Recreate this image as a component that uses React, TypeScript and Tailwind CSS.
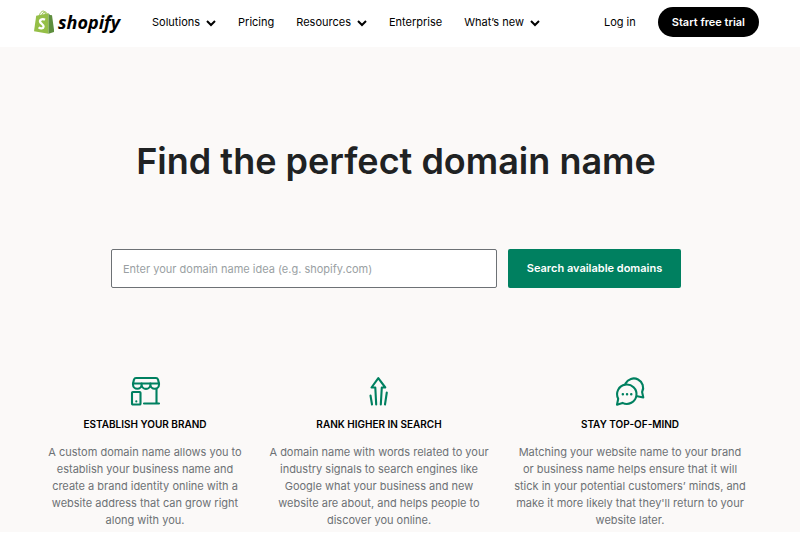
import React from 'react';

const navItems = [
  { label: 'Solutions', menu: true },
  { label: 'Pricing', menu: false },
  { label: 'Resources', menu: true },
  { label: 'Enterprise', menu: false },
  { label: 'What’s new', menu: true }
];

function ShopIcon() {
  return (
    <svg className="h-8 w-8" viewBox="0 0 32 32" fill="none" stroke="#008060" strokeWidth="2.1" strokeLinejoin="round" strokeLinecap="round" aria-hidden="true">
      <path d="M7 3h20q1.500 0 2 1.500L30 8.500H4l1-4Q5.500 3 7 3z" />
      <path d="M4 8.500v1a4.300 4.300 0 0 0 8.600 0a4.400 4.400 0 0 0 8.800 0a4.300 4.300 0 0 0 8.600 0v-1M12.600 8.500v1M21.400 8.500v1" />
      <path d="M27.500 14v14.500M15 28.500h15" />
      <rect x="3" y="17" width="8.500" height="12.500" rx="0.800" />
      <path d="M7.300 26.300v.2" />
    </svg>);

}

function ArrowIcon() {
  return (
    <svg className="h-8 w-8" viewBox="0 0 32 32" fill="none" stroke="#008060" strokeWidth="2.1" strokeLinejoin="round" strokeLinecap="round" aria-hidden="true">
      <path d="M13.200 29.500L12.300 12.500H8.500l6.800-9.300 7 9.300h-3.500l-1 17" />
      <path d="M7.500 20.500l1.500 9M23.800 17.500l-1.800 12" />
    </svg>);

}

function ChatIcon() {
  return (
    <svg className="h-8 w-8" viewBox="0 0 32 32" fill="none" stroke="#008060" strokeWidth="2.1" strokeLinejoin="round" strokeLinecap="round" aria-hidden="true">
      <path d="M3 29.700l1.200-6a9.700 9.700 0 1 1 4.300 4.200z" />
      <path d="M11.500 8.500a9.200 9.200 0 1 1 16.600 8.500l1.200 5.500-6-1.300" />
      <path d="M8.800 19.200h.1M13 19.200h.1M17.200 19.200h.1" strokeWidth="2.400" />
    </svg>);

}

const features = [
  {
    title: 'Establish your brand',
    icon: <ShopIcon />,
    width: 'max-w-[200px]',
    text: 'A custom domain name allows you to establish your business name and create a brand identity online with a website address that can grow right along with you.'
  },
  {
    title: 'Rank higher in search',
    icon: <ArrowIcon />,
    width: 'max-w-[225px]',
    text: 'A domain name with words related to your industry signals to search engines like Google what your business and new website are about, and helps people to discover you online.'
  },
  {
    title: 'Stay top-of-mind',
    icon: <ChatIcon />,
    width: 'max-w-[232px]',
    text: "Matching your website name to your brand or business name helps ensure that it will stick in your potential customers’ minds, and make it more likely that they'll return to your website later."
  }
];

function Logo() {
  return (
    <a href="#" className="flex items-center gap-1 text-black" aria-label="shopify">
      <svg className="h-6 w-5" viewBox="0 0 20 24" aria-hidden="true">
        <path d="M5 7C5.500 3 8 .9 9.500 1.100c1.600.2 2 2.600 2 4.900M7.500 6C8 3.500 10 1.500 11.500 2c1.300.5 1.700 2 1.800 3.500" fill="none" stroke="#95bf47" strokeWidth="1" />
        <path d="M2.200 5.800L14.500 3.200v20.600L0 21.300z" fill="#95bf47" />
        <path d="M14.500 3.200l1.500 1.900 2 .2L20.300 22l-5.800 1.800z" fill="#5e8e3e" />
        <path d="M11 9.800C9 8.600 5.800 9.100 6 11.600c.2 2.100 3.900 2.700 3.600 5-.2 2.100-3 2.300-5 .8" fill="none" stroke="#fff" strokeWidth="2.300" />
      </svg>
      <span className="font-['Open_Sans','Noto_Sans',sans-serif] text-lg leading-6 font-bold italic">shopify</span>
    </a>);

}

function Chevron() {
  return (
    <svg className="mt-0.5 h-2 w-2.5" viewBox="0 0 10 8" fill="none" stroke="#000" strokeWidth="2" aria-hidden="true">
      <path d="M1 2l4 4 4-4" />
    </svg>);

}

export default function App() {
  return (
    <div className="bg-white pb-2 font-['Inter',sans-serif] text-black">
      <header className="flex h-[47px] items-center pr-[41px] pb-[3px] pl-[34px] text-[11px]">
        <Logo />
        <nav className="ml-8 flex flex-1 items-center gap-[22px]">
          {navItems.map((item) =>
          item.menu ?
          <button key={item.label} type="button" className="flex items-center gap-1.5">
                {item.label}
                <Chevron />
              </button> :

          <a key={item.label} href="#">{item.label}</a>

          )}
        </nav>
        <a href="#" className="mr-[22px]">Log in</a>
        <a href="#" className="rounded-full bg-black px-3.5 py-1.5 leading-[18px] font-semibold text-white">
          Start free trial
        </a>
      </header>

      <main className="bg-[#fbf9f8]">
        <section className="pt-[90px]">
          <h1 className="pr-2 text-center text-4xl leading-[48px] font-semibold text-[#202223]">
            Find the perfect domain name
          </h1>
          <form className="mt-16 flex gap-[11px] pr-[119px] pl-[111px] text-[11px]" onSubmit={(e) => e.preventDefault()}>
            <input
              type="text"
              aria-label="Domain name idea"
              placeholder="Enter your domain name idea (e.g. shopify.com)"
              className="h-[39px] min-w-0 flex-1 rounded-xs border border-[#6d7175] bg-white px-[11px] placeholder:text-[#9a9fa3]" />
            <button type="submit" className="h-[39px] w-[173px] rounded-xs bg-[#008060] font-semibold text-white">
              Search available domains
            </button>
          </form>
        </section>

        <section className="grid grid-cols-[234fr_234fr_268fr] pt-[87px] pr-9 pb-[3px] pl-7 text-center">
          {features.map((feature) =>
          <article key={feature.title} className="flex flex-col items-center px-1">
              {feature.icon}
              <h2 className="mt-[9px] text-[10px] leading-4 font-semibold uppercase">{feature.title}</h2>
              <p className={`mt-3 text-[11px] leading-[17px] text-[#6d7175] ${feature.width}`}>{feature.text}</p>
            </article>
          )}
        </section>
      </main>
    </div>);

}
